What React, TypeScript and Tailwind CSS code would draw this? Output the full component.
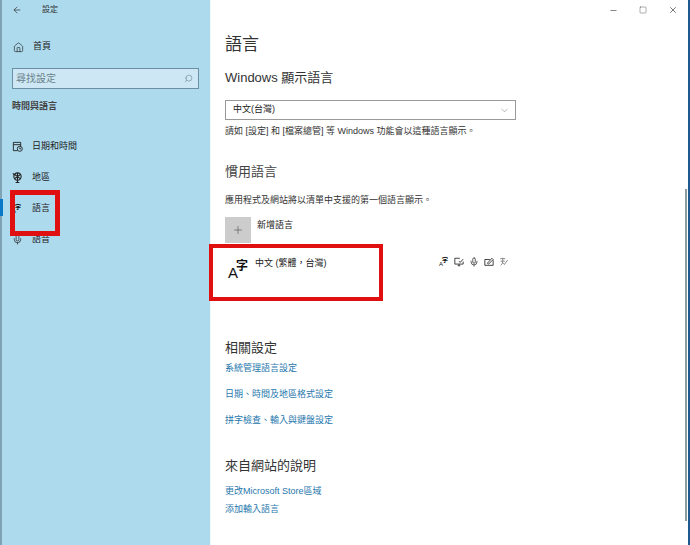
import { ArrowLeft, Home, Search, Mic, Plus, ChevronDown, Minus, Square, X } from 'lucide-react';

const font = { fontFamily: '"Liberation Sans", "Noto Sans CJK TC", sans-serif' };

function NavRow({ icon, label }: { icon: React.ReactNode; label: string }) {
    return (
        <div className="flex items-center h-[31px] pl-[10px]">
            <span className="w-[20px] flex justify-start text-[#222]">{icon}</span>
            <span className="text-[9px] text-[#222]">{label}</span>
        </div>
    );
}

function SmallLang() {
    return (
        <span className="flex w-[10px] h-[10px] leading-none text-[#111]">
            <span className="self-end text-[6px] leading-none">A</span>
            <span className="self-start -ml-[1px] text-[6px] leading-none font-bold">字</span>
        </span>
    );
}

export default function App() {
    return (
        <div className="relative flex w-[690px] h-[545px] overflow-hidden bg-white" style={font}>
            {/* Sidebar */}
            <div className="w-[210px] h-full shrink-0 bg-[#aedaee] border-l-2 border-[#7fa3b5] flex flex-col">
                <div className="flex items-center h-[19px] pl-[10px]">
                    <ArrowLeft size={10} strokeWidth={1.5} className="text-[#222]" />
                    <span className="ml-[20px] text-[8px] text-[#333]">設定</span>
                </div>
                <div className="mt-[18px] flex items-center h-[20px] pl-[11px]">
                    <Home size={11} strokeWidth={1.4} className="text-[#222]" />
                    <span className="ml-[9px] text-[9px] text-[#222]">首頁</span>
                </div>
                <div className="mt-[11px] ml-[10px] w-[187px] h-[21px] border border-[#6b8fa3] bg-[#cde8f4] flex items-center justify-between pl-[3px] pr-[5px]">
                    <span className="text-[10px] text-[#6a7f8a]">尋找設定</span>
                    <Search size={9} strokeWidth={1.4} className="text-[#5f7a88] -scale-x-100" />
                </div>
                <div className="mt-[9px] pl-[10px] h-[18px] flex items-center text-[9px] font-bold text-[#444]">時間與語言</div>
                <div className="mt-[15px]">
                    <NavRow
                        icon={
                            <svg width="11" height="11" viewBox="0 0 24 24" fill="none" stroke="#222" strokeWidth="2">
                                <path d="M12 21H3V3H19V11M3 8H19" />
                                <circle cx="17" cy="17" r="5.5" />
                                <path d="M17 14V17H20" />
                            </svg>
                        }
                        label="日期和時間"
                    />
                    <NavRow
                        icon={
                            <svg width="11" height="11" viewBox="0 0 24 24" fill="none" stroke="#222" strokeWidth="2.4">
                                <circle cx="12" cy="10" r="8" />
                                <path d="M5 5L19 15M19 5L5 15M12 2V18M2 3L5 6M12 18V23M8 23H16" />
                            </svg>
                        }
                        label="地區"
                    />
                    <div className="relative">
                        <span className="absolute left-[-2px] top-[6px] w-[3px] h-[17px] bg-[#0a78c8]" />
                        <NavRow icon={<SmallLang />} label="語言" />
                    </div>
                    <NavRow icon={<Mic size={11} strokeWidth={1.6} />} label="語音" />
                </div>
            </div>

            {/* Content */}
            <div className="flex-1 pl-[14px] flex flex-col text-[#222] border-l border-[#eef8fc]">
                <div className="h-[20px] flex justify-end items-center pr-[12px] gap-[21px] text-[#333]">
                    <Minus size={9} strokeWidth={1.6} />
                    <Square size={8} strokeWidth={1.2} />
                    <X size={10} strokeWidth={1.6} />
                </div>
                <h1 className="mt-[12px] text-[17px] leading-[26px] text-[#333]">語言</h1>
                <h2 className="mt-[10px] text-[13px] leading-[20px] text-[#333]">Windows 顯示語言</h2>
                <div className="mt-[12px] w-[291px] h-[20px] border border-[#999] flex items-center justify-between pl-[7px] pr-[5px]">
                    <span className="text-[9px]">中文(台灣)</span>
                    <ChevronDown size={11} strokeWidth={1} className="text-[#666]" />
                </div>
                <p className="mt-[4px] text-[9px] leading-[14px] text-[#333]">請如 [設定] 和 [檔案總管] 等 Windows 功能會以這種語言顯示。</p>
                <h2 className="mt-[24px] text-[13px] leading-[20px] text-[#444]">慣用語言</h2>
                <p className="mt-[11px] text-[9px] leading-[14px] text-[#333]">應用程式及網站將以清單中支援的第一個語言顯示。</p>
                <div className="mt-[10px] flex h-[26px]">
                    <div className="w-[26px] h-[26px] bg-[#cccccc] flex items-center justify-center">
                        <Plus size={12} strokeWidth={1} className="text-[#333]" />
                    </div>
                    <span className="ml-[6px] text-[9px] leading-[14px] mt-[1px]">新增語言</span>
                </div>
                <div className="mt-[4px] flex h-[50px] w-[284px]">
                    <span className="mt-[11px] ml-[3px] flex w-[20px] h-[22px] text-[#111]">
                        <span className="self-end text-[15px] leading-none">A</span>
                        <span className="self-start mt-[2px] -ml-[2px] text-[12px] leading-none font-bold">字</span>
                    </span>
                    <span className="ml-[7px] mt-[9px] text-[9px] leading-[14px]">中文 (繁體，台灣)</span>
                    <div className="ml-auto mt-[9px] h-[12px] flex items-center gap-[5px] text-[#222]">
                        <SmallLang />
                        <svg width="10" height="10" viewBox="0 0 24 24" fill="none" stroke="#222" strokeWidth="2"><path d="M14 3H2V17H22V11M9 21H15M12 17V21M12 10L15 13L22 5" /></svg>
                        <Mic size={10} strokeWidth={1.7} />
                        <svg width="10" height="10" viewBox="0 0 24 24" fill="none" stroke="#222" strokeWidth="2"><path d="M14 6H2V20H22V8M8 15L19 3L22 6L11 17Z" /></svg>
                        <svg width="10" height="10" viewBox="0 0 24 24" fill="none" stroke="#777" strokeWidth="2"><path d="M3 4H15M9 2V10M4 10H14M10 14L13 18L21 7M9 10Q9 18 4 20" /></svg>
                    </div>
                </div>
                <h2 className="mt-[41px] text-[13px] leading-[20px] text-[#333]">相關設定</h2>
                <div className="mt-[3px] flex flex-col gap-[12px] text-[9px] leading-[14px] text-[#1f77ad]">
                    <a>系統管理語言設定</a>
                    <a>日期、時間及地區格式設定</a>
                    <a>拼字檢查、輸入與鍵盤設定</a>
                </div>
                <h2 className="mt-[29px] text-[13px] leading-[20px] text-[#333]">來自網站的說明</h2>
                <div className="mt-[8px] flex flex-col gap-[4px] text-[9px] leading-[14px] text-[#1f77ad]">
                    <a>更改Microsoft Store區域</a>
                    <a>添加輸入語言</a>
                </div>
            </div>

            {/* Scrollbar and desktop edge */}
            <div className="absolute left-[685px] top-[189px] w-[2px] h-[332px] bg-[#8a9ba3]" />
            <div className="absolute right-0 top-0 w-[2px] h-full bg-[#1c5a8f]" />

            {/* Red annotation boxes */}
            <div className="absolute left-[10px] top-[190px] w-[50px] h-[46px] border-[5px] border-[#e01010]" />
            <div className="absolute left-[209px] top-[244px] w-[174px] h-[57px] border-[4px] border-[#e01010]" />
        </div>
    );
}
